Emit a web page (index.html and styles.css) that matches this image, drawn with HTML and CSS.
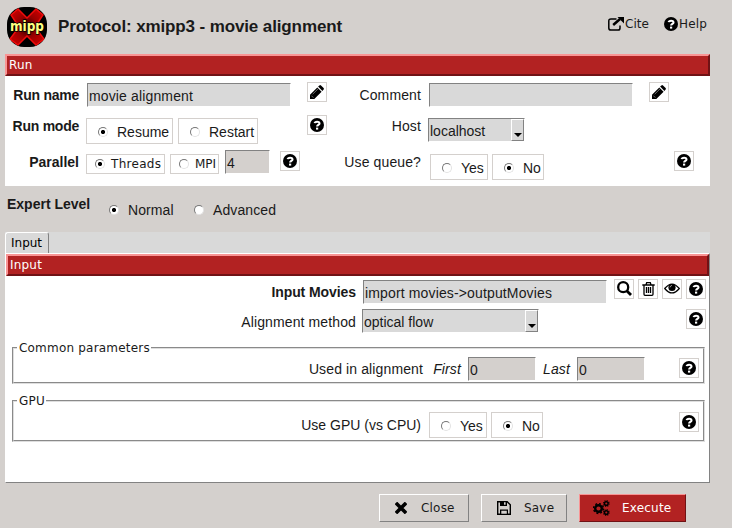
FILE: index.html
```html
<!DOCTYPE html>
<html lang="en">
<head>
<meta charset="utf-8">
<title>Protocol: xmipp3 - movie alignment</title>
<link rel="stylesheet" href="styles.css">
</head>
<body>
<svg class="defs" width="0" height="0">
  <symbol id="help" viewBox="0 0 14 14"><circle cx="7" cy="7" r="7"/><path d="M4.700 5.200C4.900 3.300 9.500 3 9.500 5.400C9.500 7 7.100 6.900 7.100 8.600" fill="none" stroke="#fff" stroke-width="2.100"/><path d="M6 9.600h2.200v2H6z" fill="#fff"/></symbol>
  <symbol id="pencil" viewBox="0 0 14 14"><path d="M0 14V9.700L7.300 2.400L11.600 6.700L4.300 14zM8.100 1.600L9.400.4Q10.200-.3 11 .4L13.600 3Q14.300 3.800 13.600 4.600L12.400 5.900z"/><path d="M2.700 9.200L8 3.900M1.300 10.600L3.400 12.700" stroke="#999" stroke-width=".7"/></symbol>
  <symbol id="search" viewBox="0 0 15 15"><circle cx="6.200" cy="6.200" r="5" fill="none" stroke="#000" stroke-width="2.300"/><path d="M9.700 9.700L14 14" stroke="#000" stroke-width="2.800"/></symbol>
  <symbol id="trash" viewBox="0 0 13 14"><path d="M.3 3h12.400M4 2.800L4.700.7h3.600L9 2.800M2 3v9.200Q2 13.300 3 13.300h7Q11 13.300 11 12.200V3M4.500 5v6M6.500 5v6M8.500 5v6" fill="none" stroke="#000" stroke-width="1.300"/></symbol>
  <symbol id="eye" viewBox="0 0 16 11"><path d="M.7 5.500Q8-3.400 15.300 5.500Q8 14.400.7 5.500z" fill="#fff" stroke="#000" stroke-width="1.200"/><circle cx="8" cy="4.500" r="3.600"/><path d="M6 4.400Q6.200 2.600 8 2.400" fill="none" stroke="#bbb" stroke-width=".8"/></symbol>
</svg>

<header class="header">
  <svg class="logo" viewBox="0 0 40 40">
    <defs>
      <clipPath id="disc"><rect width="40" height="40" rx="17"/></clipPath>
      <radialGradient id="glow"><stop offset="0" stop-color="#200"/><stop offset=".6" stop-color="#900"/><stop offset="1" stop-color="#b00"/></radialGradient>
    </defs>
    <g clip-path="url(#disc)"><rect width="40" height="40"/>
      <path d="M4 8L11 2L20 11L29 2L36 8L28 20L37 32L29 38L20 29L11 38L3 32L12 20z" fill="url(#glow)" stroke="#f00c0c" stroke-width="1.500"/>
    </g>
    <text x="3" y="24" textLength="34" lengthAdjust="spacingAndGlyphs" class="logo-text">mipp</text>
  </svg>
  <h1 class="title">Protocol: xmipp3 - movie alignment</h1>
  <a class="link cite"><svg width="16" height="14" viewBox="0 0 16 14"><path d="M8.500 2H3Q.8 2 .8 4v7Q.8 13.100 3 13.100h7Q12 13.100 12 11V8.500" fill="none" stroke="#000" stroke-width="1.500"/><path d="M5.200 8L12 2" stroke="#000" stroke-width="2.500"/><path d="M9.500 0H16V6.400z"/></svg><span>Cite</span></a>
  <a class="link help-link"><svg width="14" height="14"><use href="#help"/></svg><span>Help</span></a>
</header>

<section class="panel run">
  <div class="bar">Run</div>
  <div class="row r1">
    <span class="label bold tight l-a">Run name</span><span class="entry name">movie alignment</span>
    <span class="icon first"><svg width="14" height="14"><use href="#pencil"/></svg></span>
    <span class="label l-b">Comment</span><span class="entry comment"></span>
    <span class="icon second"><svg width="14" height="14"><use href="#pencil"/></svg></span>
  </div>
  <div class="row r2">
    <span class="label bold tight l-a">Run mode</span>
    <span class="choice resume"><i class="radio on"></i>Resume</span><span class="choice restart"><i class="radio"></i>Restart</span>
    <span class="icon mode-help"><svg width="14" height="14"><use href="#help"/></svg></span>
    <span class="label l-b">Host</span><span class="combo host"><span>localhost</span><b class="drop"></b></span>
  </div>
  <div class="row r3">
    <span class="label bold l-a">Parallel</span>
    <span class="choice small threads"><i class="radio on"></i>Threads</span><span class="choice small mpi"><i class="radio"></i>MPI</span>
    <span class="entry off count">4</span>
    <span class="icon par-help"><svg width="14" height="14"><use href="#help"/></svg></span>
    <span class="label l-q">Use queue?</span>
    <span class="choice yes"><i class="radio"></i>Yes</span><span class="choice no"><i class="radio on"></i>No</span>
    <span class="icon queue-help"><svg width="14" height="14"><use href="#help"/></svg></span>
  </div>
</section>

<div class="expert">
  <span class="bold level">Expert Level</span>
  <span class="plain normal"><i class="radio on"></i>Normal</span><span class="plain advanced"><i class="radio"></i>Advanced</span>
</div>

<nav class="tabs"><span class="tab">Input</span></nav>
<section class="panel pane">
  <div class="bar">Input</div>
  <div class="row p1">
    <span class="label bold snug l-c">Input Movies</span><span class="entry movies">import movies-&gt;outputMovies</span>
    <div class="tools">
      <span class="icon"><svg width="15" height="15"><use href="#search"/></svg></span>
      <span class="icon"><svg width="13" height="14"><use href="#trash"/></svg></span>
      <span class="icon"><svg width="16" height="11"><use href="#eye"/></svg></span>
      <span class="icon"><svg width="14" height="14"><use href="#help"/></svg></span>
    </div>
  </div>
  <div class="row p2">
    <span class="label l-c">Alignment method</span><span class="combo method"><span>optical flow</span><b class="drop"></b></span>
    <span class="icon method-help"><svg width="14" height="14"><use href="#help"/></svg></span>
  </div>
  <fieldset class="group common">
    <legend>Common parameters</legend>
    <div class="row">
      <span class="label used">Used in alignment</span><em class="label it">First</em><span class="entry off num">0</span>
      <em class="label it last">Last</em><span class="entry off num">0</span>
      <span class="icon"><svg width="14" height="14"><use href="#help"/></svg></span>
    </div>
  </fieldset>
  <fieldset class="group gpu">
    <legend>GPU</legend>
    <div class="row">
      <span class="label use-gpu">Use GPU (vs CPU)</span>
      <span class="choice yes"><i class="radio"></i>Yes</span><span class="choice no"><i class="radio on"></i>No</span>
      <span class="icon"><svg width="14" height="14"><use href="#help"/></svg></span>
    </div>
  </fieldset>
</section>

<footer class="footer">
  <button class="btn close"><svg width="12" height="12" viewBox="0 0 12 12"><path d="M2.200 2.200L9.800 9.800M9.800 2.200L2.200 9.800" stroke="#000" stroke-width="3.600" stroke-linecap="square"/></svg><span>Close</span></button>
  <button class="btn save"><svg width="14" height="14" viewBox="0 0 14 14"><path d="M.7.7H10.200L13.300 3.800V13.300H.7z" fill="none" stroke="#000" stroke-width="1.400"/><path d="M3 0h7v5H3zM3 8.500h8V14H3z"/><path d="M7 1.300h1.600v2.500H7zM4.300 9.700h5.500v3H4.300z" fill="#d4d0cd"/></svg><span>Save</span></button>
  <button class="btn execute"><svg width="17" height="16" viewBox="0 0 17 16"><g fill="none" stroke="#000"><circle cx="5.500" cy="8.500" r="3.300" stroke-width="2.400"/><circle cx="5.500" cy="8.500" r="4.900" stroke-width="1.500" stroke-dasharray="1.920 1.920"/><circle cx="13.300" cy="3.500" r="1.800" stroke-width="1.500"/><circle cx="13.300" cy="3.500" r="2.800" stroke-width="1.200" stroke-dasharray="1.100 1.100"/><circle cx="13.300" cy="12.500" r="1.800" stroke-width="1.500"/><circle cx="13.300" cy="12.500" r="2.800" stroke-width="1.200" stroke-dasharray="1.100 1.100"/></g></svg><span>Execute</span></button>
</footer>
</body>
</html>
```
FILE: styles.css
```css
* { box-sizing: border-box; }
body {
  margin: 0;
  width: 732px;
  height: 528px;
  padding: 0 22px 0 5px;
  overflow: hidden;
  background: #d4d0cd;
  color: #1a1a1a;
  font: 14px/16px "Liberation Sans", Arial, sans-serif;
  white-space: nowrap;
}
.defs { display: block; height: 0; }
svg { display: block; flex: none; }
.bold { font-weight: bold; }

.header { display: flex; height: 54px; align-items: flex-start; }
.logo { width: 40px; height: 40px; margin: 7px 0 0 2px; overflow: visible; }
.logo-text {
  font: bold 14px "DejaVu Sans", sans-serif;
  fill: #ffff80;
  stroke: #000;
  stroke-width: 1.5px;
  paint-order: stroke;
}
.title { margin: 17px 0 0 11px; width: 299px; font-size: 17px; line-height: 20px; letter-spacing: -.12px; }
.link { display: flex; margin-top: 17px; font: 12px/14px "DejaVu Sans", sans-serif; }
.cite { margin-left: 251px; width: 56px; gap: 1px; }
.help-link { gap: 1px; letter-spacing: .2px; }

.panel { background: #fff; }
.bar {
  height: 22px;
  padding-left: 2px;
  border: 2px solid;
  border-color: #f99494 #701215 #701215 #f99494;
  background: #b22222;
  color: #fff;
  font: 12px/18px "DejaVu Sans", sans-serif;
  letter-spacing: .2px;
}
.run { height: 132px; }
.row { display: flex; align-items: flex-start; }
.label { flex: none; text-align: right; letter-spacing: .12px; }
.label.bold { letter-spacing: 0; }
.label.tight { letter-spacing: -.25px; }
.label.snug { letter-spacing: -.08px; }
.entry, .combo {
  flex: none;
  height: 24px;
  padding-left: 1px;
  border: 1px solid;
  border-color: #828282 #fff #fff #828282;
  background: #d9d9d9;
  line-height: 24px;
  letter-spacing: .14px;
}
.entry.off { background: #d4d0cd; }
.icon {
  display: flex;
  flex: none;
  width: 20px;
  height: 20px;
  align-items: center;
  justify-content: center;
  border: 1px solid #d4d0cd;
  padding-bottom: 1px;
}
.choice {
  display: flex;
  flex: none;
  align-items: center;
  gap: 9px;
  height: 26px;
  padding: 1px 0 0 11px;
  border: 1px solid #d4d0cd;
}
.choice.small { height: 20px; padding: 0 0 0 8px; gap: 6px; font: 12px/16px "DejaVu Sans", sans-serif; }
.radio {
  width: 10px;
  height: 10px;
  flex: none;
  border: 1px solid;
  border-color: #777 #e3e3e3 #e3e3e3 #777;
  border-radius: 50%;
  background: #fff;
}
.radio.on { background: radial-gradient(circle at center, #000 1.6px, #fff 2.5px); }
.combo { display: flex; justify-content: space-between; letter-spacing: 0; }
.drop {
  display: flex;
  width: 13px;
  height: 22px;
  padding-bottom: 3px;
  align-items: flex-end;
  justify-content: center;
  border: 1px solid;
  border-color: #fff #828282 #828282 #fff;
}
.drop::after { content: ""; border: 4px solid transparent; border-top-color: #000; border-bottom: 0; }

.l-a { width: 74px; }
.r1 { padding-top: 6px; height: 39px; }
.r1 .label { margin-top: 5px; }
.r1 .entry { margin-top: 1px; }
.name { margin-left: 8px; width: 204px; }
.first { margin-left: 16px; }
.l-b { width: 94px; }
.comment { margin-left: 8px; width: 204px; }
.second { margin-left: 16px; }
.r2 { height: 35px; }
.r2 .label { margin-top: 3px; }
.resume { margin: 3px 0 0 7px; width: 87px; }
.restart { margin: 3px 0 0 5px; width: 80px; }
.mode-help { margin-left: 49px; }
.host { margin: 3px 0 0 7px; width: 97px; }
.r3 .label { margin-top: 4px; }
.threads { margin: 4px 0 0 7px; width: 79px; letter-spacing: .3px; }
.mpi { margin: 4px 0 0 5px; width: 49px; }
.count { margin-left: 6px; width: 45px; }
.par-help { margin: 1px 0 0 10px; }
.l-q { width: 121px; }
.yes { width: 58px; }
.no { width: 52px; margin-left: 4px; }
.r3 .yes { margin: 4px 0 0 9px; }
.r3 .no { margin-top: 4px; }
.queue-help { margin: 1px 0 0 130px; }

.expert { display: flex; height: 46px; padding: 10px 0 0 2px; }
.level { width: 102px; }
.plain { display: flex; align-items: center; gap: 9px; height: 16px; margin-top: 6px; letter-spacing: .1px; }
.normal { width: 85px; }

.tabs { display: flex; height: 21px; background: #d9d9d9; }
.tab {
  width: 44px;
  padding-left: 5px;
  border: 1px solid;
  border-width: 1px 1px 0;
  border-color: #fff #828282 #fff #fff;
  border-radius: 3px 3px 0 0;
  font: 12px/20px "DejaVu Sans", sans-serif;
  color: #000;
}
.pane { height: 230px; border: 1px solid; border-color: #fff #828282 #828282 #fff; }
.p1 { height: 33px; padding-top: 3px; }
.l-c { width: 350px; }
.p1 .label { margin-top: 5px; }
.movies { width: 244px; margin: 1px 0 0 7px; }
.tools { display: flex; gap: 4px; margin-left: 7px; }
.p2 .label { margin-top: 5px; }
.method { width: 177px; margin-left: 6px; }
.method-help { margin-left: 147px; }
.group {
  margin: 0 4px 0 6px;
  padding: 0;
  border: 2px groove #dedede;
  min-width: 0;
}
.group legend { margin-left: 3px; padding: 0 1px 0 2px; font: 12px/14px "DejaVu Sans", sans-serif; letter-spacing: .2px; }
.common { height: 43px; margin-top: 8px; }
.common .row { margin-top: 2px; }
.common .label { margin-top: 4px; }
.used { width: 409px; }
.it { width: 38px; font-style: italic; }
.num { width: 68px; margin-left: 7px; }
.it.last { width: 34px; }
.common .icon { margin: 1px 0 0 34px; }
.gpu { height: 48px; margin-top: 10px; }
.gpu .row { margin-top: 4px; }
.label.use-gpu { width: 407px; margin-top: 5px; letter-spacing: 0; }
.gpu .yes { margin-left: 8px; }
.gpu .icon { margin-left: 136px; }

.footer { display: flex; gap: 12px; margin: 11px 0 0 374px; }
.btn {
  display: flex;
  align-items: center;
  height: 28px;
  padding: 0 0 0 15px;
  border: 1px solid;
  border-color: #fff #828282 #828282 #fff;
  background: #d4d0cd;
  color: #1a1a1a;
  font: 12px/14px "DejaVu Sans", sans-serif;
  letter-spacing: .2px;
}
.close { width: 90px; gap: 14px; }
.save { width: 86px; gap: 13px; }
.execute { width: 107px; padding-left: 13px; gap: 12px; background: #b22222; border-color: #f99494 #701215 #701215 #f99494; color: #fff; }
```
